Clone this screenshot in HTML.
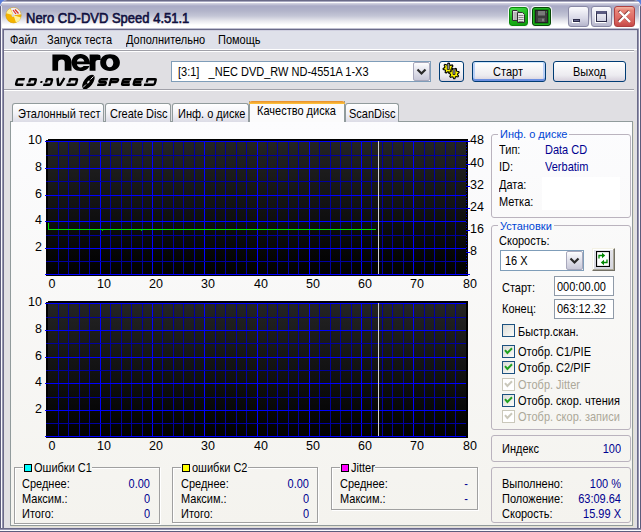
<!DOCTYPE html>
<html><head><meta charset="utf-8">
<style>
*{margin:0;padding:0;box-sizing:border-box}
html,body{width:641px;height:532px;overflow:hidden;background:#5a7edc}
body{font-family:"Liberation Sans",sans-serif;font-size:11px;color:#000;position:relative}
.a{position:absolute}
.t{position:absolute;white-space:nowrap;line-height:13px;transform:scaleY(1.12);transform-origin:0 2px}
#win{position:absolute;left:0;top:0;width:641px;height:532px;background:#e0dfe3;border-radius:7px 7px 0 0;overflow:hidden}
#title{position:absolute;left:0;top:0;width:641px;height:30px;
 background:linear-gradient(#6a6a88 0,#6a6a88 1px,#a8a8c0 1px,#a8a8c0 2px,#fcfcfe 2px,#fcfcfe 3px,#d8d8e4 3px,#a9aac6 6px,#b2b4ca 11px,#c4c6d6 16px,#e8e8ee 21px,#ffffff 25px,#ffffff 28px,#c0c0d2 28px,#c0c0d2 29px,#6a6a88 29px);
 border-radius:7px 7px 0 0}
.tb{position:absolute;top:6px;width:21px;height:21px;border-radius:3px;border:1px solid #8888a4;
 background:linear-gradient(#fbfbfd,#d8d8e6 60%,#b6b6cc)}
.frL{position:absolute;top:29px;width:4px;height:503px}
#panel{position:absolute;left:10px;top:121px;width:623px;height:405px;border:1px solid #919b9c;background:linear-gradient(#fcfcfe,#f4f3ee);
 box-shadow:1px 1px 0 #e3e0cf}
.tab{position:absolute;top:103px;height:19px;border:1px solid #919b9c;border-bottom:none;border-radius:3px 3px 0 0;
 background:linear-gradient(#ffffff,#f3f3f7 50%,#dcdce6)}
.grp{position:absolute;border:1px solid #bab3be;border-radius:3px}
.grp2{position:absolute;border:1px solid #a0a0a0;box-shadow:inset 1px 1px 0 #fff,1px 1px 0 #fff}
.lab{position:absolute;white-space:nowrap;line-height:13px;background:#fbfbfc;padding:0 2px}
.val{color:#000090}
.cb{position:absolute;width:13px;height:13px;border:1px solid #1c5180;background:linear-gradient(135deg,#dcdcd7,#fbfbf9)}
.cb.dis{border-color:#cac8bb;background:#fff}
.cl{position:absolute;white-space:nowrap;font-size:12.5px;line-height:14px}
.sq{display:inline-block;width:9px;height:8px;border:1px solid #000;margin-right:2px;vertical-align:0px}
</style></head><body>
<div id="win">
 <div id="title"></div>
 <!-- app icon -->
 <svg class="a" style="left:5px;top:7px" width="17" height="17" viewBox="0 0 17 17">
  <circle cx="8.5" cy="8.3" r="7.6" fill="#f4b400" stroke="#d89a00" stroke-width="0.6"/>
  <path d="M8.5 8.3 L1.2 6.2 A7.6 7.6 0 0 1 5 1.6 Z" fill="#fff29a"/>
  <path d="M8.5 8.3 L15.8 10.4 A7.6 7.6 0 0 1 11 15.5 Z" fill="#fff29a"/>
  <path d="M8.5 8.3 L5.5 1.3 A7.6 7.6 0 0 1 16 7.2 Z" fill="#eeeef2"/>
  <path d="M8 3 L11 7 M10 2.5 L13.5 6.5" stroke="#e03020" stroke-width="1.2"/>
  <circle cx="8" cy="8.6" r="1.4" fill="#d8d8e0"/>
 </svg>
 <div class="t" style="left:26px;top:10px;font-size:13px;color:#101040;line-height:15px;-webkit-text-stroke:0.55px #101040">Nero CD-DVD Speed 4.51.1</div>
 <!-- green title buttons -->
 <div class="a" style="left:509px;top:7px;width:19px;height:19px;border-radius:3px;border:1px solid #0a8a0a;background:linear-gradient(160deg,#4ee04e,#1cb41c 50%,#0e9a0e);box-shadow:0 0 0 1px #f4f4f8"></div>
 <svg class="a" style="left:511px;top:9px" width="16" height="15" viewBox="0 0 16 15">
  <path d="M1.5 1.5 H6 L7.5 3 V11.5 H1.5 Z" fill="#e6e6e6" stroke="#303030" stroke-width="1"/>
  <path d="M2.5 4 H6.5 M2.5 6 H6.5 M2.5 8 H6.5 M2.5 10 H6.5" stroke="#707070" stroke-width="0.8"/>
  <path d="M6.5 3.5 H11.5 L13.5 5.5 V13.5 H6.5 Z" fill="#e6e6e6" stroke="#303030" stroke-width="1"/>
  <path d="M7.5 6.5 H12.5 M7.5 8.5 H12.5 M7.5 10.5 H12.5 M7.5 12.5 H12.5" stroke="#707070" stroke-width="0.8"/>
 </svg>
 <div class="a" style="left:532px;top:7px;width:19px;height:19px;border-radius:3px;border:1px solid #064806;background:#0e8a0e;box-shadow:0 0 0 1px #f4f4f8,inset 0 0 0 1px #22b022"></div>
 <div class="a" style="left:535px;top:10px;width:13px;height:13px;background:#222"></div>
 <svg class="a" style="left:535px;top:10px" width="13" height="13" viewBox="0 0 13 13">
  <path d="M1 1 H11.5 L12 1.5 V12 H1 Z" fill="#3c3c3c"/>
  <rect x="3" y="1" width="7" height="4.5" fill="#7a7a7a"/>
  <rect x="3" y="8" width="7" height="4" fill="#555"/>
  <rect x="7" y="8.7" width="2" height="2.6" fill="#808080"/>
  <rect x="11" y="1.5" width="1" height="1" fill="#30d030"/>
 </svg>
 <!-- min max close -->
 <div class="tb" style="left:568px"></div>
 <div class="a" style="left:573px;top:19px;width:7px;height:3px;background:#64648a;border:1px solid #2c2c48;box-shadow:-1px 1px 0 #fff"></div>
 <div class="tb" style="left:591px"></div>
 <div class="a" style="left:596px;top:11px;width:11px;height:11px;border:1px solid #2c2c48;border-top:3px solid #5a5a80;box-shadow:-1px 1px 0 #fff;background:linear-gradient(#e8e8f0,#d0d0e0)"></div>
 <div class="tb" style="left:614px;border-color:#b04040;background:linear-gradient(#f2b8a4 0,#e88478 18%,#e0706a 50%,#d45e58 80%,#c44848 100%)"></div>
 <svg class="a" style="left:614px;top:6px" width="21" height="21" viewBox="0 0 21 21">
  <path d="M5.3 5.3 L16 16 M15.5 5.5 L5 16" stroke="#5a2020" stroke-width="2.6" transform="translate(-0.5,-0.5)" opacity="0.8"/><path d="M5.5 5.5 L16 16 M15.5 5.5 L5 16" stroke="#fff" stroke-width="2.4"/>
 </svg>

 <!-- frame left/right/bottom -->
 <div class="frL" style="left:0;background:linear-gradient(90deg,#5c5c7c 1px,#fafafd 1px,#fafafd 2px,#9494b0 2px,#9494b0 3px,#6a6a88 3px)"></div>
 <div class="frL" style="left:637px;background:linear-gradient(90deg,#6a6a88 1px,#9494b0 1px,#9494b0 2px,#fafafd 2px,#fafafd 3px,#5c5c7c 3px)"></div>
 <div class="a" style="left:0;top:528px;width:641px;height:4px;background:linear-gradient(#6a6a88 1px,#9494b0 1px,#9494b0 2px,#fafafd 2px,#fafafd 3px,#5c5c7c 3px)"></div>

 <div class="a" style="left:0;top:6px;width:2px;height:23px;background:linear-gradient(90deg,#5c5c7c 1px,#f0f0f6 1px)"></div>
 <div class="a" style="left:639px;top:6px;width:2px;height:23px;background:linear-gradient(90deg,#f0f0f6 1px,#5c5c7c 1px)"></div>
 <!-- menu -->
 <div class="a" style="left:4px;top:30px;width:633px;height:19px;background:#dfe1ea"></div>
 <div class="a" style="left:4px;top:30px;width:633px;height:1px;background:#d0d0e0"></div>
 <div class="a" style="left:4px;top:49px;width:633px;height:1px;background:#fff"></div>
 <div class="t" style="left:10px;top:33px">Файл</div>
 <div class="t" style="left:47px;top:33px">Запуск теста</div>
 <div class="t" style="left:126px;top:33px">Дополнительно</div>
 <div class="t" style="left:218px;top:33px">Помощь</div>
 <div class="a" style="left:4px;top:50px;width:630px;height:1px;background:#a0a0a8"></div>
 <div class="a" style="left:4px;top:51px;width:630px;height:1px;background:#fff"></div>

 <!-- logo -->
 <svg class="a" style="left:0;top:0" width="170" height="92">
  <path fill="#000" fill-rule="evenodd" d="M52.4 70.8 V54.5 H64 C68.5 54.5 71.5 57.5 71.5 62 V70.8 H64.7 V62.3 C64.7 60.4 63.7 59.4 61.8 59.4 C59.6 59.4 58.1 60.6 58.1 62.6 V70.8 Z
 M80.5 54.1 C85.8 54.1 89.6 57.6 89.6 62.9 V64.3 H76.9 C77.2 66.3 78.6 67.4 80.6 67.4 C82 67.4 83 66.9 83.6 66 H89.3 C88.2 69.3 84.9 71 80.5 71 C75.1 71 71.7 67.6 71.7 62.5 C71.7 57.4 75.2 54.1 80.5 54.1 Z
 M76.9 61.6 H84.3 C84 59.6 82.6 58.3 80.6 58.3 C78.6 58.3 77.2 59.6 76.9 61.6 Z
 M89.6 70.8 V54.5 H97.6 C99.6 54.5 100.6 55.3 100.6 57 V60.1 H98 C96.4 60.1 95.5 61 95.5 62.6 V70.8 Z
 M110 54.2 C116 54.2 119.9 57.6 119.9 62.6 C119.9 67.6 116 71 110 71 C104 71 100.2 67.6 100.2 62.6 C100.2 57.6 104 54.2 110 54.2 Z
 M109.7 58.2 C107.6 58.2 106.1 60 106.1 62.75 C106.1 65.5 107.6 67.3 109.7 67.3 C111.8 67.3 113.3 65.5 113.3 62.75 C113.3 60 111.8 58.2 109.7 58.2 Z"/>
  <g transform="translate(0,86) skewX(-14) translate(0,-86)" fill="none" stroke="#000" stroke-width="2.4" stroke-linejoin="round">
   <path d="M23 79.2 H16.80 Q15.60 79.2 15.60 80.40 V83.60 Q15.60 84.8 16.80 84.8 H23"/>
   <path d="M28.40 82.60 V79.2 H33.10 Q34.30 79.2 34.30 80.40 V83.60 Q34.30 84.8 33.10 84.8 H26.2"/>
   <path d="M45.20 82.60 V79.2 H49.30 Q50.50 79.2 50.50 80.40 V83.60 Q50.50 84.8 49.30 84.8 H43"/>
   <path d="M55.50 78.00 L57.95 84.8 H59.95 L62.40 78.00"/>
   <path d="M68.40 82.60 V79.2 H74.30 Q75.50 79.2 75.50 80.40 V83.60 Q75.50 84.8 74.30 84.8 H66.2"/>
   <path d="M106.2 79.2 H99.40 Q98.20 79.2 98.20 80.60 Q98.20 82 99.60 82 H103.60 Q105.00 82 105.00 83.40 Q105.00 84.8 103.80 84.8 H97"/>
   <path d="M109.40 86 V79.2 H115.40 Q116.60 79.2 116.60 80.60 Q116.60 82 115.40 82 H109.40"/>
   <path d="M129.5 79.2 H122.80 Q121.60 79.2 121.60 80.40 V83.60 Q121.60 84.8 122.80 84.8 H129.5 M121.60 82 H128.70"/>
   <path d="M141.2 79.2 H134.40 Q133.20 79.2 133.20 80.40 V83.60 Q133.20 84.8 134.40 84.8 H141.2 M133.20 82 H140.40"/>
   <path d="M145.90 82.60 V79.2 H153.00 Q154.20 79.2 154.20 80.40 V83.60 Q154.20 84.8 153.00 84.8 H143.7"/>
   <rect x="39.4" y="81" width="2" height="2" fill="#000" stroke="none"/>
  </g>
  <ellipse cx="88.4" cy="82" rx="8.6" ry="4.3" transform="rotate(-52 88.4 82)" fill="#000"/>
  <path d="M93.5 76.5 L90.5 79.5 M86 84.5 L83 87.5" stroke="#e0dfe3" stroke-width="1"/>
  <ellipse cx="88.4" cy="82" rx="1.8" ry="0.9" transform="rotate(-52 88.4 82)" fill="#e0dfe3"/>
 </svg>
 <!-- drive combo -->
 <div class="a" style="left:171px;top:61px;width:260px;height:21px;border:1px solid #7f9db9;background:#fff"></div>
 <div class="t" style="left:178px;top:65px">[3:1]&nbsp;&nbsp;&nbsp;_NEC DVD_RW ND-4551A 1-X3</div>
 <div class="a" style="left:413px;top:62px;width:17px;height:19px;border:1px solid #a8a8bc;border-radius:2px;background:linear-gradient(#fefefe,#eeeef4 25%,#c8c8d8)"></div>
 <svg class="a" style="left:416px;top:68px" width="11" height="8" viewBox="0 0 11 8"><path d="M1.5 1.5 L5.5 5.5 L9.5 1.5" fill="none" stroke="#2a2a2a" stroke-width="2.2"/></svg>
 <!-- gear button -->
 <div class="a" style="left:439px;top:61px;width:25px;height:21px;border:1px solid #003c74;border-radius:3px;background:linear-gradient(#fff,#ecebf0 70%,#d6d0dc)"></div>
 <svg class="a" style="left:441px;top:62px" width="22" height="19" viewBox="0 0 22 19">
  <path d="M12.40 7.33 L12.04 8.44 L10.25 8.54 L9.68 9.14 L9.67 10.93 L8.58 11.34 L7.39 10.00 L6.56 9.93 L5.16 11.04 L4.16 10.44 L4.46 8.68 L4.01 7.99 L2.26 7.58 L2.10 6.43 L3.67 5.56 L3.93 4.78 L3.16 3.16 L3.96 2.31 L5.61 3.01 L6.39 2.71 L7.17 1.10 L8.33 1.20 L8.82 2.93 L9.54 3.35 L11.29 2.96 L11.93 3.93 L10.89 5.39 L11.00 6.21Z" fill="#f8f000" stroke="#000" stroke-width="1.1"/>
  <path d="M17.56 13.99 L16.89 14.95 L15.16 14.51 L14.43 14.91 L13.90 16.62 L12.73 16.69 L11.99 15.06 L11.23 14.75 L9.55 15.39 L8.77 14.53 L9.59 12.93 L9.36 12.14 L7.81 11.23 L8.00 10.08 L9.75 9.73 L10.23 9.05 L9.97 7.27 L10.99 6.71 L12.36 7.86 L13.19 7.80 L14.42 6.50 L15.49 6.94 L15.45 8.73 L16.01 9.34 L17.79 9.49 L18.12 10.60 L16.70 11.69 L16.56 12.51Z" fill="#f8f000" stroke="#000" stroke-width="1.1"/>
  <path d="M6.3 7.5 V2.5 L7.3 1 L8.3 2.5 V7.5Z" fill="#a0a0b0" stroke="#000" stroke-width="0.7"/>
  <path d="M12 12.5 V7.5 L13 6 L14 7.5 V12.5Z" fill="#a0a0b0" stroke="#000" stroke-width="0.7"/>
 </svg>
 <div class="a" style="left:472px;top:61px;width:74px;height:21px;border:1px solid #003c74;border-radius:3px;background:linear-gradient(#fff,#ecebf0 70%,#d6d0dc);box-shadow:inset 0 -2px 0 #6c8fe0,inset 0 1px 0 #cee7ff,inset 2px 0 0 #b8cff6,inset -2px 0 0 #b8cff6"></div>
 <div class="t" style="left:471px;top:65px;width:74px;text-align:center">Старт</div>
 <div class="a" style="left:553px;top:61px;width:73px;height:21px;border:1px solid #003c74;border-radius:3px;background:linear-gradient(#fff,#ecebf0 70%,#d6d0dc)"></div>
 <div class="t" style="left:553px;top:65px;width:73px;text-align:center">Выход</div>
 <div class="a" style="left:4px;top:89px;width:630px;height:1px;background:#a0a0a8"></div>
 <div class="a" style="left:4px;top:90px;width:630px;height:1px;background:#fff"></div>

 <!-- tabs -->
 <div id="panel"></div>
 <div class="tab" style="left:12px;width:92px"></div>
 <div class="t" style="left:18px;top:107px">Эталонный тест</div>
 <div class="tab" style="left:105px;width:66px"></div>
 <div class="t" style="left:110px;top:107px">Create Disc</div>
 <div class="tab" style="left:172px;width:77px"></div>
 <div class="t" style="left:178px;top:107px">Инф. о диске</div>
 <div class="tab" style="left:345px;width:54px"></div>
 <div class="t" style="left:349px;top:107px">ScanDisc</div>
 <div class="a" style="left:249px;top:101px;width:96px;height:21px;border:1px solid #919b9c;border-top:none;border-bottom:none;background:#fbfbfc"></div>
 <div class="a" style="left:249px;top:101px;width:96px;height:3px;border-radius:3px 3px 0 0;background:linear-gradient(#e68b2c,#ffc73c)"></div>
 <div class="t" style="left:257px;top:104px">Качество диска</div>

 <svg class="a" style="left:0;top:0" width="641" height="532" shape-rendering="crispEdges">
<defs><linearGradient id="grad" x1="0" y1="0" x2="0" y2="1"><stop offset="0" stop-color="#242424"/><stop offset="1" stop-color="#000"/></linearGradient>
<pattern id="dash" width="1" height="3" patternUnits="userSpaceOnUse"><rect width="1" height="1" fill="#0000e0"/></pattern></defs>
<rect x="46" y="139" width="422" height="137" fill="#000"/>
<rect x="48" y="141" width="418" height="133" fill="url(#grad)"/>
<rect x="46" y="139" width="2" height="1" fill="#fbfbfb"/>
<rect x="58" y="141" width="1" height="133" fill="#0000a0"/>
<rect x="68" y="141" width="1" height="133" fill="#0000a0"/>
<rect x="79" y="141" width="1" height="133" fill="#0000a0"/>
<rect x="89" y="141" width="1" height="133" fill="#0000a0"/>
<rect x="100" y="141" width="1" height="133" fill="#0000ff"/>
<rect x="110" y="141" width="1" height="133" fill="#0000a0"/>
<rect x="121" y="141" width="1" height="133" fill="#0000a0"/>
<rect x="131" y="141" width="1" height="133" fill="#0000a0"/>
<rect x="142" y="141" width="1" height="133" fill="#0000a0"/>
<rect x="152" y="141" width="1" height="133" fill="#0000ff"/>
<rect x="162" y="141" width="1" height="133" fill="#0000a0"/>
<rect x="173" y="141" width="1" height="133" fill="#0000a0"/>
<rect x="183" y="141" width="1" height="133" fill="#0000a0"/>
<rect x="194" y="141" width="1" height="133" fill="#0000a0"/>
<rect x="204" y="141" width="1" height="133" fill="#0000ff"/>
<rect x="215" y="141" width="1" height="133" fill="#0000a0"/>
<rect x="225" y="141" width="1" height="133" fill="#0000a0"/>
<rect x="236" y="141" width="1" height="133" fill="#0000a0"/>
<rect x="246" y="141" width="1" height="133" fill="#0000a0"/>
<rect x="257" y="141" width="1" height="133" fill="#0000ff"/>
<rect x="267" y="141" width="1" height="133" fill="#0000a0"/>
<rect x="277" y="141" width="1" height="133" fill="#0000a0"/>
<rect x="288" y="141" width="1" height="133" fill="#0000a0"/>
<rect x="298" y="141" width="1" height="133" fill="#0000a0"/>
<rect x="309" y="141" width="1" height="133" fill="#0000ff"/>
<rect x="319" y="141" width="1" height="133" fill="#0000a0"/>
<rect x="330" y="141" width="1" height="133" fill="#0000a0"/>
<rect x="340" y="141" width="1" height="133" fill="#0000a0"/>
<rect x="351" y="141" width="1" height="133" fill="#0000a0"/>
<rect x="361" y="141" width="1" height="133" fill="#0000ff"/>
<rect x="371" y="141" width="1" height="133" fill="#0000a0"/>
<rect x="382" y="141" width="1" height="133" fill="#0000a0"/>
<rect x="392" y="141" width="1" height="133" fill="#0000a0"/>
<rect x="403" y="141" width="1" height="133" fill="#0000a0"/>
<rect x="413" y="141" width="1" height="133" fill="#0000ff"/>
<rect x="424" y="141" width="1" height="133" fill="#0000a0"/>
<rect x="434" y="141" width="1" height="133" fill="#0000a0"/>
<rect x="445" y="141" width="1" height="133" fill="#0000a0"/>
<rect x="455" y="141" width="1" height="133" fill="#0000a0"/>
<rect x="466" y="272" width="1" height="1" fill="#0000b8"/>
<rect x="466" y="269" width="1" height="1" fill="#0000b8"/>
<rect x="466" y="266" width="1" height="1" fill="#0000b8"/>
<rect x="466" y="263" width="1" height="1" fill="#0000b8"/>
<rect x="466" y="261" width="1" height="1" fill="#0000b8"/>
<rect x="466" y="258" width="1" height="1" fill="#0000b8"/>
<rect x="466" y="255" width="1" height="1" fill="#0000b8"/>
<rect x="466" y="252" width="1" height="1" fill="#0000b8"/>
<rect x="466" y="250" width="1" height="1" fill="#0000b8"/>
<rect x="466" y="247" width="1" height="1" fill="#0000b8"/>
<rect x="466" y="244" width="1" height="1" fill="#0000b8"/>
<rect x="466" y="241" width="1" height="1" fill="#0000b8"/>
<rect x="466" y="238" width="1" height="1" fill="#0000b8"/>
<rect x="466" y="236" width="1" height="1" fill="#0000b8"/>
<rect x="466" y="233" width="1" height="1" fill="#0000b8"/>
<rect x="466" y="230" width="1" height="1" fill="#0000b8"/>
<rect x="466" y="227" width="1" height="1" fill="#0000b8"/>
<rect x="466" y="225" width="1" height="1" fill="#0000b8"/>
<rect x="466" y="222" width="1" height="1" fill="#0000b8"/>
<rect x="466" y="219" width="1" height="1" fill="#0000b8"/>
<rect x="466" y="216" width="1" height="1" fill="#0000b8"/>
<rect x="466" y="214" width="1" height="1" fill="#0000b8"/>
<rect x="466" y="211" width="1" height="1" fill="#0000b8"/>
<rect x="466" y="208" width="1" height="1" fill="#0000b8"/>
<rect x="466" y="205" width="1" height="1" fill="#0000b8"/>
<rect x="466" y="202" width="1" height="1" fill="#0000b8"/>
<rect x="466" y="200" width="1" height="1" fill="#0000b8"/>
<rect x="466" y="197" width="1" height="1" fill="#0000b8"/>
<rect x="466" y="194" width="1" height="1" fill="#0000b8"/>
<rect x="466" y="191" width="1" height="1" fill="#0000b8"/>
<rect x="466" y="189" width="1" height="1" fill="#0000b8"/>
<rect x="466" y="186" width="1" height="1" fill="#0000b8"/>
<rect x="466" y="183" width="1" height="1" fill="#0000b8"/>
<rect x="466" y="180" width="1" height="1" fill="#0000b8"/>
<rect x="466" y="178" width="1" height="1" fill="#0000b8"/>
<rect x="466" y="175" width="1" height="1" fill="#0000b8"/>
<rect x="466" y="172" width="1" height="1" fill="#0000b8"/>
<rect x="466" y="169" width="1" height="1" fill="#0000b8"/>
<rect x="466" y="166" width="1" height="1" fill="#0000b8"/>
<rect x="466" y="164" width="1" height="1" fill="#0000b8"/>
<rect x="466" y="161" width="1" height="1" fill="#0000b8"/>
<rect x="466" y="158" width="1" height="1" fill="#0000b8"/>
<rect x="466" y="155" width="1" height="1" fill="#0000b8"/>
<rect x="466" y="153" width="1" height="1" fill="#0000b8"/>
<rect x="466" y="150" width="1" height="1" fill="#0000b8"/>
<rect x="466" y="147" width="1" height="1" fill="#0000b8"/>
<rect x="466" y="144" width="1" height="1" fill="#0000b8"/>
<rect x="45" y="274" width="421" height="1" fill="#0000ff"/>
<rect x="46" y="261" width="420" height="1" fill="#0000a0"/>
<rect x="45" y="248" width="421" height="1" fill="#0000ff"/>
<rect x="46" y="235" width="420" height="1" fill="#0000a0"/>
<rect x="45" y="221" width="421" height="1" fill="#0000ff"/>
<rect x="46" y="208" width="420" height="1" fill="#0000a0"/>
<rect x="45" y="195" width="421" height="1" fill="#0000ff"/>
<rect x="46" y="181" width="420" height="1" fill="#0000a0"/>
<rect x="45" y="168" width="421" height="1" fill="#0000ff"/>
<rect x="46" y="155" width="420" height="1" fill="#0000a0"/>
<rect x="45" y="141" width="421" height="1" fill="#0000ff"/>
<rect x="466" y="274" width="4" height="1" fill="#0000ff"/>
<rect x="466" y="252" width="4" height="1" fill="#0000ff"/>
<rect x="466" y="230" width="4" height="1" fill="#0000ff"/>
<rect x="466" y="208" width="4" height="1" fill="#0000ff"/>
<rect x="466" y="186" width="4" height="1" fill="#0000ff"/>
<rect x="466" y="164" width="4" height="1" fill="#0000ff"/>
<rect x="466" y="141" width="4" height="1" fill="#0000ff"/>
<rect x="378" y="141" width="1" height="133" fill="#d0d0d0"/>
<path d="M48.5 223 V229.5 H375.5" fill="none" stroke="#00e000" stroke-width="1"/><rect x="102" y="230" width="1" height="1" fill="#00c000"/><rect x="141" y="230" width="1" height="1" fill="#00c000"/>
<rect x="46" y="301" width="422" height="137" fill="#000"/>
<rect x="48" y="303" width="418" height="133" fill="url(#grad)"/>
<rect x="46" y="301" width="2" height="1" fill="#fbfbfb"/>
<rect x="58" y="303" width="1" height="133" fill="#0000a0"/>
<rect x="68" y="303" width="1" height="133" fill="#0000a0"/>
<rect x="79" y="303" width="1" height="133" fill="#0000a0"/>
<rect x="89" y="303" width="1" height="133" fill="#0000a0"/>
<rect x="100" y="303" width="1" height="133" fill="#0000ff"/>
<rect x="110" y="303" width="1" height="133" fill="#0000a0"/>
<rect x="121" y="303" width="1" height="133" fill="#0000a0"/>
<rect x="131" y="303" width="1" height="133" fill="#0000a0"/>
<rect x="142" y="303" width="1" height="133" fill="#0000a0"/>
<rect x="152" y="303" width="1" height="133" fill="#0000ff"/>
<rect x="162" y="303" width="1" height="133" fill="#0000a0"/>
<rect x="173" y="303" width="1" height="133" fill="#0000a0"/>
<rect x="183" y="303" width="1" height="133" fill="#0000a0"/>
<rect x="194" y="303" width="1" height="133" fill="#0000a0"/>
<rect x="204" y="303" width="1" height="133" fill="#0000ff"/>
<rect x="215" y="303" width="1" height="133" fill="#0000a0"/>
<rect x="225" y="303" width="1" height="133" fill="#0000a0"/>
<rect x="236" y="303" width="1" height="133" fill="#0000a0"/>
<rect x="246" y="303" width="1" height="133" fill="#0000a0"/>
<rect x="257" y="303" width="1" height="133" fill="#0000ff"/>
<rect x="267" y="303" width="1" height="133" fill="#0000a0"/>
<rect x="277" y="303" width="1" height="133" fill="#0000a0"/>
<rect x="288" y="303" width="1" height="133" fill="#0000a0"/>
<rect x="298" y="303" width="1" height="133" fill="#0000a0"/>
<rect x="309" y="303" width="1" height="133" fill="#0000ff"/>
<rect x="319" y="303" width="1" height="133" fill="#0000a0"/>
<rect x="330" y="303" width="1" height="133" fill="#0000a0"/>
<rect x="340" y="303" width="1" height="133" fill="#0000a0"/>
<rect x="351" y="303" width="1" height="133" fill="#0000a0"/>
<rect x="361" y="303" width="1" height="133" fill="#0000ff"/>
<rect x="371" y="303" width="1" height="133" fill="#0000a0"/>
<rect x="382" y="303" width="1" height="133" fill="#0000a0"/>
<rect x="392" y="303" width="1" height="133" fill="#0000a0"/>
<rect x="403" y="303" width="1" height="133" fill="#0000a0"/>
<rect x="413" y="303" width="1" height="133" fill="#0000ff"/>
<rect x="424" y="303" width="1" height="133" fill="#0000a0"/>
<rect x="434" y="303" width="1" height="133" fill="#0000a0"/>
<rect x="445" y="303" width="1" height="133" fill="#0000a0"/>
<rect x="455" y="303" width="1" height="133" fill="#0000a0"/>
<rect x="45" y="436" width="421" height="1" fill="#0000ff"/>
<rect x="46" y="423" width="420" height="1" fill="#0000a0"/>
<rect x="45" y="410" width="421" height="1" fill="#0000ff"/>
<rect x="46" y="397" width="420" height="1" fill="#0000a0"/>
<rect x="45" y="383" width="421" height="1" fill="#0000ff"/>
<rect x="46" y="370" width="420" height="1" fill="#0000a0"/>
<rect x="45" y="357" width="421" height="1" fill="#0000ff"/>
<rect x="46" y="343" width="420" height="1" fill="#0000a0"/>
<rect x="45" y="330" width="421" height="1" fill="#0000ff"/>
<rect x="46" y="317" width="420" height="1" fill="#0000a0"/>
<rect x="45" y="303" width="421" height="1" fill="#0000ff"/>
<rect x="378" y="303" width="1" height="133" fill="#d0d0d0"/>
</svg>
<div class="cl" style="left:0;width:42px;text-align:right;top:133px">10</div>
<div class="cl" style="left:0;width:42px;text-align:right;top:160px">8</div>
<div class="cl" style="left:0;width:42px;text-align:right;top:187px">6</div>
<div class="cl" style="left:0;width:42px;text-align:right;top:213px">4</div>
<div class="cl" style="left:0;width:42px;text-align:right;top:240px">2</div>
<div class="cl" style="left:32px;width:40px;text-align:center;top:277px">0</div>
<div class="cl" style="left:84px;width:40px;text-align:center;top:277px">10</div>
<div class="cl" style="left:136px;width:40px;text-align:center;top:277px">20</div>
<div class="cl" style="left:188px;width:40px;text-align:center;top:277px">30</div>
<div class="cl" style="left:241px;width:40px;text-align:center;top:277px">40</div>
<div class="cl" style="left:293px;width:40px;text-align:center;top:277px">50</div>
<div class="cl" style="left:345px;width:40px;text-align:center;top:277px">60</div>
<div class="cl" style="left:397px;width:40px;text-align:center;top:277px">70</div>
<div class="cl" style="left:450px;width:40px;text-align:center;top:277px">80</div>
<div class="cl" style="left:470px;top:244px">8</div>
<div class="cl" style="left:470px;top:222px">16</div>
<div class="cl" style="left:470px;top:200px">24</div>
<div class="cl" style="left:470px;top:178px">32</div>
<div class="cl" style="left:470px;top:156px">40</div>
<div class="cl" style="left:470px;top:133px">48</div>
<div class="cl" style="left:0;width:42px;text-align:right;top:295px">10</div>
<div class="cl" style="left:0;width:42px;text-align:right;top:322px">8</div>
<div class="cl" style="left:0;width:42px;text-align:right;top:349px">6</div>
<div class="cl" style="left:0;width:42px;text-align:right;top:375px">4</div>
<div class="cl" style="left:0;width:42px;text-align:right;top:402px">2</div>
<div class="cl" style="left:32px;width:40px;text-align:center;top:439px">0</div>
<div class="cl" style="left:84px;width:40px;text-align:center;top:439px">10</div>
<div class="cl" style="left:136px;width:40px;text-align:center;top:439px">20</div>
<div class="cl" style="left:188px;width:40px;text-align:center;top:439px">30</div>
<div class="cl" style="left:241px;width:40px;text-align:center;top:439px">40</div>
<div class="cl" style="left:293px;width:40px;text-align:center;top:439px">50</div>
<div class="cl" style="left:345px;width:40px;text-align:center;top:439px">60</div>
<div class="cl" style="left:397px;width:40px;text-align:center;top:439px">70</div>
<div class="cl" style="left:450px;width:40px;text-align:center;top:439px">80</div>
 <!-- right: disc info -->
 <div class="grp" style="left:491px;top:134px;width:140px;height:84px"></div>
 <div class="lab" style="left:498px;top:128px;color:#0046d5;background:#fcfcfd">Инф. о диске</div>
 <div class="a" style="left:542px;top:177px;width:78px;height:33px;background:#fff"></div>
 <div class="t" style="left:499px;top:143px">Тип:</div>
 <div class="t val" style="left:545px;top:143px">Data CD</div>
 <div class="t" style="left:499px;top:160px">ID:</div>
 <div class="t val" style="left:545px;top:160px">Verbatim</div>
 <div class="t" style="left:499px;top:178px">Дата:</div>
 <div class="t" style="left:499px;top:195px">Метка:</div>
 <!-- settings -->
 <div class="grp" style="left:491px;top:225px;width:140px;height:205px"></div>
 <div class="lab" style="left:498px;top:220px;color:#0046d5;background:#fafaf9">Установки</div>
 <div class="t" style="left:499px;top:234px">Скорость:</div>
 <div class="a" style="left:500px;top:250px;width:84px;height:21px;border:1px solid #7f9db9;background:#fff"></div>
 <div class="t" style="left:505px;top:254px">16 X</div>
 <div class="a" style="left:566px;top:251px;width:17px;height:19px;border:1px solid #a8a8bc;border-radius:2px;background:linear-gradient(#fefefe,#eeeef4 25%,#c8c8d8)"></div>
 <svg class="a" style="left:569px;top:257px" width="11" height="8" viewBox="0 0 11 8"><path d="M1.5 1.5 L5.5 5.5 L9.5 1.5" fill="none" stroke="#2a2a2a" stroke-width="2.2"/></svg>
 <div class="a" style="left:592px;top:248px;width:23px;height:23px;background:linear-gradient(#e4e4ea,#d4d4dc);border:1px solid;border-color:#f4f2e6 #716f64 #716f64 #f4f2e6;box-shadow:inset -1px -1px 0 #aca899,inset 1px 1px 0 #fff"></div>
 <svg class="a" style="left:596px;top:251px" width="14" height="16" viewBox="0 0 14 16">
  <rect x="0.5" y="0.5" width="13" height="15" fill="#fff" stroke="#000" stroke-width="1.2"/>
  <path d="M3 7.5 V4.5 H6.5" fill="none" stroke="#008800" stroke-width="1.3"/>
  <path d="M6 1.8 L9.2 4.5 L6 7.2 Z" fill="#008800"/>
  <path d="M11 8.5 V11.5 H7.5" fill="none" stroke="#008800" stroke-width="1.3"/>
  <path d="M8 8.8 L4.8 11.5 L8 14.2 Z" fill="#008800"/>
 </svg>
 <div class="t" style="left:502px;top:281px">Старт:</div>
 <div class="a" style="left:554px;top:276px;width:60px;height:20px;border:1px solid #8f9aa8;background:#fff"></div>
 <div class="t" style="left:557px;top:280px">000:00.00</div>
 <div class="t" style="left:502px;top:302px">Конец:</div>
 <div class="a" style="left:554px;top:299px;width:60px;height:20px;border:1px solid #8f9aa8;background:#fff"></div>
 <div class="t" style="left:557px;top:302px">063:12.32</div>
 <div class="cb" style="left:502px;top:324px"></div>
 <div class="t" style="left:518px;top:325px">Быстр.скан.</div>
 <div class="cb" style="left:502px;top:345px"></div><svg class="a ck" style="left:504px;top:347px" width="10" height="9" viewBox="0 0 10 9"><path d="M1 3.2 L3.4 6 L8 1.2" fill="none" stroke="#21a121" stroke-width="2"/></svg>
 <div class="t" style="left:518px;top:345px">Отобр. C1/PIE</div>
 <div class="cb" style="left:502px;top:361px"></div><svg class="a ck" style="left:504px;top:363px" width="10" height="9" viewBox="0 0 10 9"><path d="M1 3.2 L3.4 6 L8 1.2" fill="none" stroke="#21a121" stroke-width="2"/></svg>
 <div class="t" style="left:518px;top:361px">Отобр. C2/PIF</div>
 <div class="cb dis" style="left:502px;top:378px"></div><svg class="a ck" style="left:504px;top:380px" width="10" height="9" viewBox="0 0 10 9"><path d="M1 3.2 L3.4 6 L8 1.2" fill="none" stroke="#cac8bb" stroke-width="2"/></svg>
 <div class="t" style="left:518px;top:378px;color:#aca899">Отобр. Jitter</div>
 <div class="cb" style="left:502px;top:394px"></div><svg class="a ck" style="left:504px;top:396px" width="10" height="9" viewBox="0 0 10 9"><path d="M1 3.2 L3.4 6 L8 1.2" fill="none" stroke="#21a121" stroke-width="2"/></svg>
 <div class="t" style="left:518px;top:394px">Отобр. скор. чтения</div>
 <div class="cb dis" style="left:502px;top:410px"></div><svg class="a ck" style="left:504px;top:412px" width="10" height="9" viewBox="0 0 10 9"><path d="M1 3.2 L3.4 6 L8 1.2" fill="none" stroke="#cac8bb" stroke-width="2"/></svg>
 <div class="t" style="left:518px;top:410px;color:#aca899">Отобр. скор. записи</div>
 <!-- index -->
 <div class="grp" style="left:491px;top:435px;width:140px;height:27px"></div>
 <div class="t" style="left:502px;top:442px">Индекс</div>
 <div class="t val" style="left:560px;width:61px;text-align:right;top:442px">100</div>
 <!-- progress -->
 <div class="grp" style="left:491px;top:467px;width:140px;height:56px"></div>
 <div class="t" style="left:502px;top:477px">Выполнено:</div>
 <div class="t val" style="left:560px;width:61px;text-align:right;top:477px">100 %</div>
 <div class="t" style="left:502px;top:492px">Положение:</div>
 <div class="t val" style="left:560px;width:61px;text-align:right;top:492px">63:09.64</div>
 <div class="t" style="left:502px;top:507px">Скорость:</div>
 <div class="t val" style="left:560px;width:61px;text-align:right;top:507px">15.99 X</div>
 <!-- bottom groups -->
 <div class="grp2" style="left:14px;top:467px;width:146px;height:57px"></div>
 <div class="a" style="left:23px;top:465px;width:69px;height:5px;background:#f5f4f0"></div><div class="a" style="left:24px;top:464px;width:8px;height:8px;border:1px solid #000;background:#00ffff"></div><div class="t" style="left:34px;top:461px">Ошибки C1</div>
 <div class="t" style="left:22px;top:477px">Среднее:</div>
 <div class="t val" style="left:90px;width:60px;text-align:right;top:477px">0.00</div>
 <div class="t" style="left:22px;top:492px">Максим.:</div>
 <div class="t val" style="left:90px;width:60px;text-align:right;top:492px">0</div>
 <div class="t" style="left:22px;top:507px">Итого:</div>
 <div class="t val" style="left:90px;width:60px;text-align:right;top:507px">0</div>

 <div class="grp2" style="left:172px;top:467px;width:146px;height:56px"></div>
 <div class="a" style="left:181px;top:465px;width:67px;height:5px;background:#f5f4f0"></div><div class="a" style="left:182px;top:464px;width:8px;height:8px;border:1px solid #000;background:#ffff00"></div><div class="t" style="left:192px;top:461px">ошибки C2</div>
 <div class="t" style="left:181px;top:477px">Среднее:</div>
 <div class="t val" style="left:249px;width:60px;text-align:right;top:477px">0.00</div>
 <div class="t" style="left:181px;top:492px">Максим.:</div>
 <div class="t val" style="left:249px;width:60px;text-align:right;top:492px">0</div>
 <div class="t" style="left:181px;top:507px">Итого:</div>
 <div class="t val" style="left:249px;width:60px;text-align:right;top:507px">0</div>

 <div class="grp2" style="left:331px;top:467px;width:147px;height:43px"></div>
 <div class="a" style="left:340px;top:465px;width:35px;height:5px;background:#f5f4f0"></div><div class="a" style="left:341px;top:464px;width:8px;height:8px;border:1px solid #000;background:#ff00ff"></div><div class="t" style="left:351px;top:461px">Jitter</div>
 <div class="t" style="left:340px;top:477px">Среднее:</div>
 <div class="t val" style="left:408px;width:60px;text-align:right;top:477px">-</div>
 <div class="t" style="left:340px;top:492px">Максим.:</div>
 <div class="t val" style="left:408px;width:60px;text-align:right;top:492px">-</div>

</div>
</body></html>
